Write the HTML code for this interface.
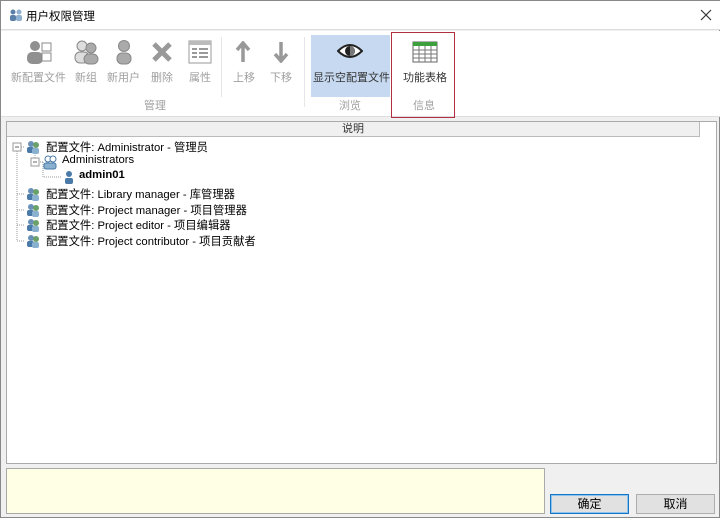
<!DOCTYPE html>
<html><head><meta charset="utf-8"><style>
*{margin:0;padding:0;box-sizing:border-box}
body{width:720px;height:518px;background:#f0f0f0;font-family:"Liberation Sans","Noto Sans CJK SC",sans-serif;font-size:12px;color:#000;position:relative;overflow:hidden;border:1px solid #888}
.abs{position:absolute}
.t{white-space:nowrap}
.gray{color:#a0a0a0}
.lbl{position:absolute;top:68px;font-size:11px;text-align:center;white-space:nowrap}
.row{position:absolute;left:45px;white-space:nowrap;font-size:11.3px}
.ic{position:absolute}
</style></head><body>
<div class="abs" style="left:0;top:0;width:720px;height:29px;background:#fff;border-bottom:1px solid #ddd"></div>
<svg class="abs" style="left:8px;top:7px" width="14" height="14"><circle cx="4" cy="4" r="2.5" fill="#5a7fa8"/><circle cx="10" cy="4" r="2.5" fill="#8fb0d0"/><rect x="1" y="7" width="6" height="6" rx="2" fill="#5a7fa8"/><rect x="7" y="7" width="6" height="6" rx="2" fill="#8fb0d0"/></svg>
<div class="abs t" style="left:25px;top:7px;font-size:11.5px">用户权限管理</div>
<svg class="abs" style="left:699px;top:8px" width="12" height="12"><path d="M1 1L11 11M11 1L1 11" stroke="#333" stroke-width="1.2"/></svg>
<div class="abs" style="left:0;top:30px;width:720px;height:86px;background:#fff;border-bottom:1px solid #ddd"></div>
<svg class="abs" style="left:25px;top:38px" width="28" height="26"><circle cx="9" cy="7" r="5" fill="#909090"/><rect x="1" y="13" width="16" height="12" rx="5" fill="#909090"/><rect x="16" y="4" width="9" height="8" fill="#fff" stroke="#888"/><rect x="16" y="14" width="9" height="8" fill="#fff" stroke="#888"/></svg>
<svg class="abs" style="left:72px;top:38px" width="28" height="26"><circle cx="9" cy="7" r="5" fill="#ddd" stroke="#888"/><circle cx="18" cy="9" r="5" fill="#aaa" stroke="#888"/><rect x="2" y="13" width="14" height="11" rx="5" fill="#ddd" stroke="#888"/><rect x="11" y="15" width="14" height="10" rx="5" fill="#aaa" stroke="#888"/></svg>
<svg class="abs" style="left:113px;top:38px" width="20" height="26"><circle cx="10" cy="7" r="5.5" fill="#aaa" stroke="#888"/><rect x="3" y="14" width="14" height="11" rx="5" fill="#aaa" stroke="#888"/></svg>
<svg class="abs" style="left:150px;top:40px" width="22" height="22"><path d="M3 3L19 19M19 3L3 19" stroke="#999" stroke-width="5"/></svg>
<svg class="abs" style="left:187px;top:39px" width="24" height="24"><rect x="1" y="1" width="22" height="22" fill="#fff" stroke="#999"/><rect x="1" y="1" width="22" height="4" fill="#bbb"/><path d="M4 9h5M11 9h9M4 13h5M11 13h9M4 17h5M11 17h9" stroke="#999" stroke-width="2"/></svg>
<svg class="abs" style="left:234px;top:40px" width="16" height="22"><path d="M8 2V21M2 9L8 2L14 9" stroke="#999" stroke-width="3.5" fill="none"/></svg>
<svg class="abs" style="left:272px;top:40px" width="16" height="22"><path d="M8 1V20M2 13L8 20L14 13" stroke="#999" stroke-width="3.5" fill="none"/></svg>
<div class="abs" style="left:220px;top:36px;width:1px;height:60px;background:#e6e6e6"></div>
<div class="abs" style="left:303px;top:36px;width:1px;height:70px;background:#e6e6e6"></div>
<div class="abs" style="left:310px;top:34px;width:79px;height:62px;background:#c6d9f0"></div>
<svg class="abs" style="left:336px;top:41px" width="26" height="18"><path d="M1 9Q13 -3 25 9Q13 21 1 9Z" fill="#fff" stroke="#222" stroke-width="2"/><circle cx="13" cy="9" r="5" fill="#222"/><path d="M13 4A5 5 0 0 1 13 14Z" fill="#777"/></svg>
<svg class="abs" style="left:411px;top:40px" width="26" height="22"><rect x="1" y="1" width="24" height="20" fill="#fff" stroke="#666"/><rect x="1" y="1" width="24" height="4" fill="#3ca03c"/><path d="M1 9H25M1 13H25M1 17H25M7 5V21M13 5V21M19 5V21" stroke="#777"/></svg>
<div class="abs" style="left:390px;top:31px;width:64px;height:86px;border:1.5px solid #b03040"></div>
<div class="lbl gray" style="left:10px">新配置文件</div>
<div class="lbl gray" style="left:74px">新组</div>
<div class="lbl gray" style="left:106px">新用户</div>
<div class="lbl gray" style="left:150px">删除</div>
<div class="lbl gray" style="left:188px">属性</div>
<div class="lbl gray" style="left:232px">上移</div>
<div class="lbl gray" style="left:269px">下移</div>
<div class="lbl" style="left:312px;color:#333">显示空配置文件</div>
<div class="lbl" style="left:402px;color:#333">功能表格</div>
<div class="abs t gray" style="left:143px;top:96px;font-size:11px">管理</div>
<div class="abs t gray" style="left:338px;top:96px;font-size:11px">浏览</div>
<div class="abs t gray" style="left:412px;top:96px;font-size:11px">信息</div>
<div class="abs" style="left:5px;top:120px;width:711px;height:343px;background:#fff;border:1px solid #aaa"></div>
<div class="abs" style="left:6px;top:121px;width:693px;height:15px;background:#f0f0f0;border-bottom:1px solid #bbb;border-right:1px solid #bbb;text-align:center;font-size:11px;line-height:14px;color:#333">说明</div>
<svg class="abs" style="left:8px;top:138px" width="60" height="110" fill="none" stroke="#999" stroke-dasharray="1 1">
<path d="M8 8V102M8 8H16M8 55H16M8 71H16M8 86H16M8 102H16M26 12V23H34M34 23V38H52"/>
<rect x="4" y="4" width="8" height="8" fill="#fff" stroke="#999" stroke-dasharray="none"/><path d="M6 8H10" stroke="#666" stroke-dasharray="none"/>
<rect x="22" y="19" width="8" height="8" fill="#fff" stroke="#999" stroke-dasharray="none"/><path d="M24 23H28" stroke="#666" stroke-dasharray="none"/>
</svg>
<svg width="0" height="0" style="position:absolute"><defs><g id="pp"><circle cx="5" cy="4" r="3" fill="#6a90b8"/><rect x="1" y="7" width="7" height="6" rx="2" fill="#4a7aa8"/><circle cx="10" cy="5" r="3" fill="#6aa06a"/><rect x="6" y="8" width="7" height="6" rx="2" fill="#8ab0d0"/></g></defs></svg>
<svg class="ic" style="left:25px;top:139px" width="15" height="15"><use href="#pp"/></svg>
<svg class="ic" style="left:42px;top:154px" width="15" height="15"><circle cx="5" cy="4" r="3" fill="#fff" stroke="#4a7aa8"/><circle cx="10" cy="4" r="3" fill="#fff" stroke="#4a7aa8"/><rect x="1" y="8" width="12" height="6" rx="2" fill="#8ab0d0" stroke="#4a7aa8"/></svg>
<svg class="ic" style="left:62px;top:169px" width="12" height="15"><circle cx="6" cy="4" r="3" fill="#4a7aa8"/><rect x="2" y="8" width="8" height="6" rx="2" fill="#4a7aa8"/></svg>
<svg class="ic" style="left:25px;top:186px" width="15" height="15"><use href="#pp"/></svg>
<svg class="ic" style="left:25px;top:202px" width="15" height="15"><use href="#pp"/></svg>
<svg class="ic" style="left:25px;top:217px" width="15" height="15"><use href="#pp"/></svg>
<svg class="ic" style="left:25px;top:233px" width="15" height="15"><use href="#pp"/></svg>
<div class="row" style="top:138px">配置文件: Administrator - 管理员</div>
<div class="row" style="left:61px;top:153px">Administrators</div>
<div class="row" style="left:78px;top:168px;font-weight:bold">admin01</div>
<div class="row" style="top:185px">配置文件: Library manager - 库管理器</div>
<div class="row" style="top:201px">配置文件: Project manager - 项目管理器</div>
<div class="row" style="top:216px">配置文件: Project editor - 项目编辑器</div>
<div class="row" style="top:232px">配置文件: Project contributor - 项目贡献者</div>
<div class="abs" style="left:5px;top:467px;width:539px;height:46px;background:#ffffe6;border:1px solid #aaa"></div>
<div class="abs" style="left:549px;top:493px;width:79px;height:20px;background:#e1e1e1;border:1px solid #1a73c4;box-shadow:inset 0 0 0 1px #8cc4f0;text-align:center;line-height:18px">确定</div>
<div class="abs" style="left:635px;top:493px;width:79px;height:20px;background:#e1e1e1;border:1px solid #adadad;text-align:center;line-height:18px">取消</div>
</body></html>
